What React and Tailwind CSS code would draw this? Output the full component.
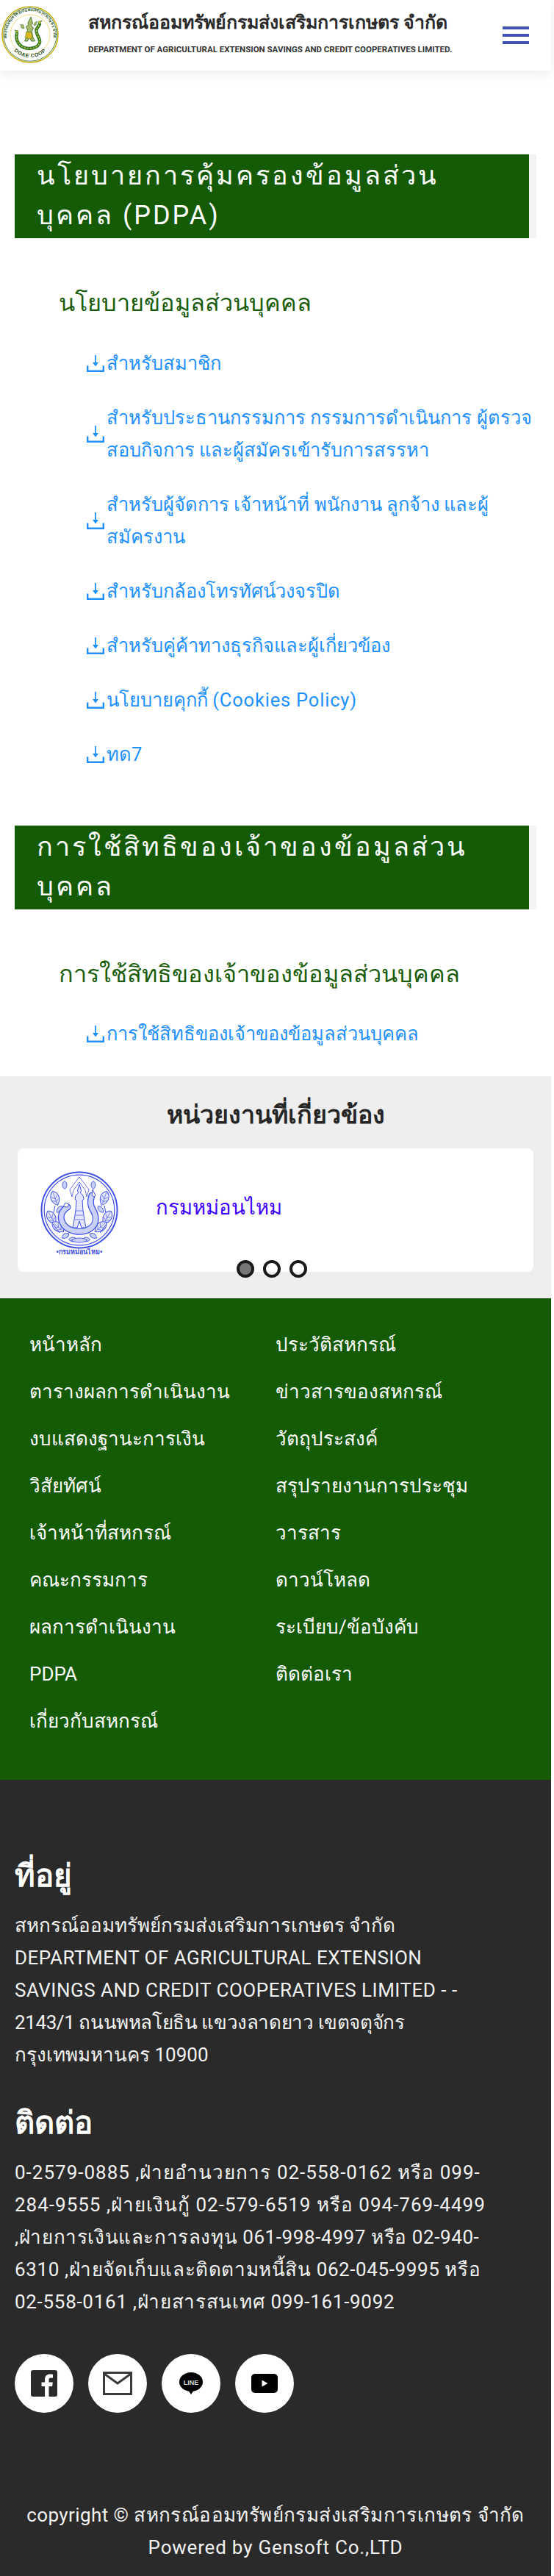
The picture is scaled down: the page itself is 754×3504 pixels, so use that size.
import React from "react";

function Dl() {
  return (
    <svg width="24" height="23" viewBox="0 0 24 23" className="shrink-0 text-[#1e90ff]" fill="none" stroke="currentColor">
      <path d="M12 0v13" strokeWidth="1.8" />
      <path d="M8 10 12 15.5 16 10z" fill="currentColor" stroke="none" />
      <path d="M1.2 14.5v7.3h21.6v-7.3" strokeWidth="2.4" />
    </svg>
  );
}

function DoaeSeal() {
  const naga = "M21 37C19 45 22 53 30 56.500C39 60 50 57 52 50C53.500 44 46.500 40 47.500 32L52 25";
  return (
    <svg width="78" height="78" viewBox="0 0 78 78" className="ml-[1px] shrink-0">
      <circle cx="39" cy="39" r="38" fill="#fff" stroke="#c9b21a" strokeWidth="1.6" />
      <circle cx="39" cy="39" r="36.200" fill="none" stroke="#2f6b2a" strokeWidth="0.8" />
      <circle cx="39" cy="39" r="27" fill="#fff" stroke="#e6d24a" strokeWidth="0.7" />
      <defs>
        <path id="sealTop" d="M8 47A32 32 0 1 1 70 47" />
        <path id="sealBot" d="M10.500 52A31.500 31.500 0 0 0 67.500 52" />
      </defs>
      <text fontSize="5.400" fill="#2c5a2a" fontFamily="'Noto Sans',sans-serif" fontWeight="700">
        <textPath href="#sealTop" startOffset="50%" textAnchor="middle">สหกรณ์ออมทรัพย์กรมส่งเสริมการเกษตร จำกัด</textPath>
      </text>
      <text fontSize="7" fill="#2a4a24" fontFamily="'Liberation Sans',sans-serif" fontWeight="700" letterSpacing="0.6">
        <textPath href="#sealBot" startOffset="50%" textAnchor="middle">DOAE COOP</textPath>
      </text>
      <path d={naga} fill="none" stroke="#2f7a2e" strokeWidth="4.400" strokeLinecap="round" />
      <path d={naga} fill="none" stroke="#d9c62a" strokeWidth="1.300" strokeDasharray="2.500 1.500" />
      <path d="M21 37l-3-4 5 1zM52 25l3-5-6 2z" fill="#d9c62a" stroke="#2f7a2e" strokeWidth="0.7" />
      <path d="M40 15l1.800 6 .7 3-2 2.500 3 3.500-2 4 1 8 3 6h-5l-2-6-3 6h-4l3-8 1-7-2-5 3-2-.5-3z" fill="#a9b96a" stroke="#2f6b2a" strokeWidth="0.8" />
      <path d="M33.500 35l7 1 2 7-4 2-6-2z" fill="#d9b81d" stroke="#2f6b2a" strokeWidth="0.5" />
      <path d="M30 26l-4-1 1 5 4 1zM45 23l3-2-1 5-3 1z" fill="#a9b96a" stroke="#2f6b2a" strokeWidth="0.5" />
    </svg>
  );
}

function BlueSeal() {
  const c = "#3f51e6";
  const naga = "M37 49C29 54 26 62 30 70C35 82 56 86 68 78C78 71 76 60 71 52C68 47 67 42 70 33";
  const big = [[20, 37, -20], [87, 37, 20], [15, 63, -30], [91, 63, 30], [24, 76, -50], [82, 76, 50]];
  const small = [[33, 19, 0], [72, 19, 0], [26, 52, 40], [82, 52, -40], [34, 88, 60], [72, 88, -60], [44, 93, 90], [62, 93, 90]];
  return (
    <svg width="106" height="116" viewBox="0 0 106 116" className="shrink-0">
      <circle cx="53" cy="53" r="51.500" fill="#fff" stroke={c} strokeWidth="2" />
      <circle cx="53" cy="53" r="47.800" fill="none" stroke={c} strokeWidth="1.200" />
      {big.map(([x, y, r]) => (
        <g key={`${x}-${y}`} transform={`translate(${x} ${y}) rotate(${r})`}>
          <path d="M0-10C7-6 8 3 0 10-8 3-7-6 0-10z" fill="#e3e6fd" stroke={c} strokeWidth="1" />
          <path d="M0-8V8M-4-3 0 1 4-3M-4 2 0 5 4 2" fill="none" stroke={c} strokeWidth="0.600" />
        </g>
      ))}
      {small.map(([x, y, r]) => (
        <g key={`${x}-${y}`} transform={`translate(${x} ${y}) rotate(${r})`}>
          <path d="M0-5.500C4-3 4 2 0 5.500-4 2-4-3 0-5.500z" fill="#c9d0fa" stroke={c} strokeWidth="0.900" />
        </g>
      ))}
      <path d="M20 47 18 56M87 47 89 56M17 72 26 84M90 72 81 84" fill="none" stroke={c} strokeWidth="1" />
      <path d="M53 8 40 25 43 35 45 26 53 15 61 26 63 35 66 25z" fill="#fff" stroke={c} strokeWidth="0.800" />
      <path d={naga} fill="none" stroke={c} strokeWidth="9" strokeLinecap="round" />
      <path d={naga} fill="none" stroke="#c9d0fa" strokeWidth="6.500" strokeLinecap="round" />
      <path d="M70 33l1-8 4 8-2 2zM37 49l-6-1 3-5 5 2z" fill="#fff" stroke={c} strokeWidth="1" />
      <path d="M53 18l2.500 8-1 4 3.500 3 1 5-2 2 1 14 2 12 2 11h-6l-3-9-3 9h-6l2-11 2-12 1-14-2-2 1-5 3.500-3-1-4z" fill="#e3e6fd" stroke={c} strokeWidth="1" />
      <path d="M48 54h10M47.500 60h11M47 66h12" stroke={c} strokeWidth="0.700" />
      <path d="M42 94c5-4 17-4 22 0-5 4-17 4-22 0z" fill="#c9d0fa" stroke={c} strokeWidth="0.900" />
      <text x="53" y="113" textAnchor="middle" fontSize="9" fontWeight="700" fill={c} fontFamily="'Noto Sans',sans-serif">•กรมหม่อนไหม•</text>
    </svg>
  );
}

function Banner({ lines }) {
  return (
    <div className="ml-[20px] w-[710px] bg-[#f3f3f3]">
      <div className="w-[700px] h-[114px] bg-[#155a05] pl-[30px] pt-[2px] text-white text-[36px] leading-[54px] tracking-[3px] overflow-hidden">
        {lines.map((l) => <div key={l} className="whitespace-nowrap">{l}</div>)}
      </div>
    </div>
  );
}

function LinkRow({ lines }) {
  return (
    <div className="flex items-center mb-[30px] ml-[118px]">
      <Dl />
      <div className="ml-[3px] text-[#1e90ff] text-[25.5px] leading-[44px]">
        {lines.map((l, i) => <div key={i} className="whitespace-nowrap">{l}</div>)}
      </div>
    </div>
  );
}

function Social({ children }) {
  return <div className="w-[80px] h-[80px] rounded-full bg-white flex items-center justify-center">{children}</div>;
}

const nav1 = ["หน้าหลัก","ตารางผลการดำเนินงาน","งบแสดงฐานะการเงิน","วิสัยทัศน์","เจ้าหน้าที่สหกรณ์","คณะกรรมการ","ผลการดำเนินงาน","PDPA","เกี่ยวกับสหกรณ์"];
const nav2 = ["ประวัติสหกรณ์","ข่าวสารของสหกรณ์","วัตถุประสงค์","สรุปรายงานการประชุม","วารสาร","ดาวน์โหลด","ระเบียบ/ข้อบังคับ","ติดต่อเรา"];
const addr = [
  ["สหกรณ์ออมทรัพย์กรมส่งเสริมการเกษตร จำกัด", "tracking-[0px]"],
  ["DEPARTMENT OF AGRICULTURAL EXTENSION", "tracking-[0.5px]"],
  ["SAVINGS AND CREDIT COOPERATIVES LIMITED - -", "tracking-[0.5px]"],
  ["2143/1 ถนนพหลโยธิน แขวงลาดยาว เขตจตุจักร", "tracking-[-0.4px]"],
  ["กรุงเทพมหานคร 10900", "tracking-[0px]"],
];
const phones = [
  ["0-2579-0885 ,ฝ่ายอำนวยการ 02-558-0162 หรือ 099-", "tracking-[1px]"],
  ["284-9555 ,ฝ่ายเงินกู้ 02-579-6519 หรือ 094-769-4499", "tracking-[1px]"],
  [",ฝ่ายการเงินและการลงทุน 061-998-4997 หรือ 02-940-", "tracking-[0.6px]"],
  ["6310 ,ฝ่ายจัดเก็บและติดตามหนี้สิน 062-045-9995 หรือ", "tracking-[0.6px]"],
  ["02-558-0161 ,ฝ่ายสารสนเทศ 099-161-9092", "tracking-[0.7px]"],
];

export default function App() {
  return (
    <div className="font-['Roboto','Noto_Sans',sans-serif] w-[754px] h-[3504px] bg-white overflow-hidden">
      <div className="w-[750px]">
        <header className="h-[96px] bg-white shadow-[0_4px_16px_rgba(0,0,0,0.08)] flex items-center">
          <div className="w-[120px] shrink-0 -mt-[2px] pl-[1px]"><DoaeSeal /></div>
          <div className="flex-1 -mt-[6px]">
            <div className="text-[25px] leading-[30px] font-bold text-[#2a2a2a] whitespace-nowrap">สหกรณ์ออมทรัพย์กรมส่งเสริมการเกษตร จำกัด</div>
            <div className="mt-[13px] text-[11.5px] leading-[16px] font-bold text-[#333] whitespace-nowrap">DEPARTMENT OF AGRICULTURAL EXTENSION SAVINGS AND CREDIT COOPERATIVES LIMITED.</div>
          </div>
          <div className="mr-[30px] w-[36px] flex flex-col gap-[6px]">
            <div className="h-[4px] bg-[#3f51b5]" /><div className="h-[4px] bg-[#3f51b5]" /><div className="h-[4px] bg-[#3f51b5]" />
          </div>
        </header>

        <main className="pt-[114px] h-[1368px]">
          <Banner lines={["นโยบายการคุ้มครองข้อมูลส่วน","บุคคล (PDPA)"]} />
          <h2 className="mt-[63px] ml-[80px] text-[32.5px] leading-[50px] text-[#1a5c0a]">นโยบายข้อมูลส่วนบุคคล</h2>
          <div className="mt-[35px]">
            <LinkRow lines={["สำหรับสมาชิก"]} />
            <LinkRow lines={["สำหรับประธานกรรมการ กรรมการดำเนินการ ผู้ตรวจ","สอบกิจการ และผู้สมัครเข้ารับการสรรหา"]} />
            <LinkRow lines={["สำหรับผู้จัดการ เจ้าหน้าที่ พนักงาน ลูกจ้าง และผู้","สมัครงาน"]} />
            <LinkRow lines={["สำหรับกล้องโทรทัศน์วงจรปิด"]} />
            <LinkRow lines={["สำหรับคู่ค้าทางธุรกิจและผู้เกี่ยวข้อง"]} />
            <LinkRow lines={[<>นโยบายคุกกี้ <span className="tracking-[0.8px]">(Cookies Policy)</span></>]} />
            <LinkRow lines={["ทด7"]} />
          </div>
          <div className="mt-[75px]"><Banner lines={["การใช้สิทธิของเจ้าของข้อมูลส่วน","บุคคล"]} /></div>
          <h2 className="mt-[63px] ml-[80px] text-[32.5px] leading-[50px] text-[#1a5c0a] whitespace-nowrap">การใช้สิทธิของเจ้าของข้อมูลส่วนบุคคล</h2>
          <div className="mt-[34px]">
            <LinkRow lines={["การใช้สิทธิของเจ้าของข้อมูลส่วนบุคคล"]} />
          </div>
        </main>

        <section className="relative h-[302px] bg-[#eeeeee] pt-[28px]">
          <h3 className="h-[70px] text-center text-[34px] leading-[48px] font-bold text-[#262626]">หน่วยงานที่เกี่ยวข้อง</h3>
          <div className="mx-[24px] h-[168px] bg-white rounded-[8px] flex pl-[31px] pt-[31px]">
            <BlueSeal />
            <div className="ml-[51px] mt-[25px] text-[27.5px] leading-[50px] text-[#3b00ff]">กรมหม่อนไหม</div>
          </div>
          <div className="absolute top-[250px] left-[322px] flex gap-[12px]">
            <div className="w-[24px] h-[24px] rounded-full border-[4px] border-[#1a1a1a] bg-[#777777]" />
            <div className="w-[24px] h-[24px] rounded-full border-[4px] border-[#1a1a1a]" />
            <div className="w-[24px] h-[24px] rounded-full border-[4px] border-[#1a1a1a]" />
          </div>
        </section>

        <nav className="h-[655px] bg-[#155a05] pt-[31px] pl-[40px] grid grid-cols-[335px_1fr] text-white text-[26px] leading-[64px]">
          <div>{nav1.map((n) => <div key={n} className="h-[64px] whitespace-nowrap">{n}</div>)}</div>
          <div>{nav2.map((n) => <div key={n} className="h-[64px] whitespace-nowrap">{n}</div>)}</div>
        </nav>

        <footer className="h-[1083px] bg-[#2a2a2a] text-white pt-[106px] pl-[20px]">
          <div className="text-[42px] leading-[50px] font-bold">ที่อยู่</div>
          <div className="mt-[20px] text-[26px] leading-[44px] text-[#f2f2f2]">
            {addr.map(([a, t]) => <div key={a} className={`whitespace-nowrap ${t}`}>{a}</div>)}
          </div>
          <div className="mt-[46px] text-[42px] leading-[50px] font-bold">ติดต่อ</div>
          <div className="mt-[20px] text-[26px] leading-[44px] text-[#f2f2f2]">
            {phones.map(([a, t]) => <div key={a} className={`whitespace-nowrap ${t}`}>{a}</div>)}
          </div>
          <div className="mt-[49px] flex gap-[20px]">
            <Social>
              <svg width="36" height="36" viewBox="0 0 36 36">
                <rect width="36" height="36" rx="3" fill="#2a2a2a" />
                <path d="M24.500 36V22h4.600l.7-5.400h-5.300v-3.400c0-1.600.5-2.600 2.700-2.600h2.800V5.800c-.5-.1-2.200-.2-4-.2-4.100 0-6.900 2.500-6.900 7v4h-4.600V22h4.600v14z" fill="#fff" />
              </svg>
            </Social>
            <Social>
              <svg width="40" height="32" viewBox="0 0 40 32" fill="none" stroke="#3a3a3a">
                <rect x="1.500" y="1.500" width="37" height="29" strokeWidth="3" />
                <path d="M2 3l18 13L38 3" strokeWidth="3" />
              </svg>
            </Social>
            <Social>
              <svg width="32" height="30" viewBox="0 0 32 30">
                <ellipse cx="16" cy="13" rx="16" ry="13" fill="#000" />
                <path d="M12 24h8l-4 6z" fill="#000" />
                <text x="16" y="16.500" textAnchor="middle" fontSize="9" fontWeight="700" fill="#ddd" fontFamily="'Liberation Sans',sans-serif">LINE</text>
              </svg>
            </Social>
            <Social>
              <svg width="36" height="26" viewBox="0 0 36 26">
                <rect width="36" height="26" rx="5" fill="#000" />
                <path d="M14.500 8.500v9l8-4.500z" fill="#fff" />
              </svg>
            </Social>
          </div>
          <div className="mt-[117px] -ml-[20px] text-center text-[26px] leading-[44px] text-[#f2f2f2]">
            <div className="whitespace-nowrap tracking-[0.4px]">copyright © สหกรณ์ออมทรัพย์กรมส่งเสริมการเกษตร จำกัด</div>
            <div className="whitespace-nowrap tracking-[0.8px]">Powered by Gensoft Co.,LTD</div>
          </div>
        </footer>
      </div>
    </div>
  );
}
